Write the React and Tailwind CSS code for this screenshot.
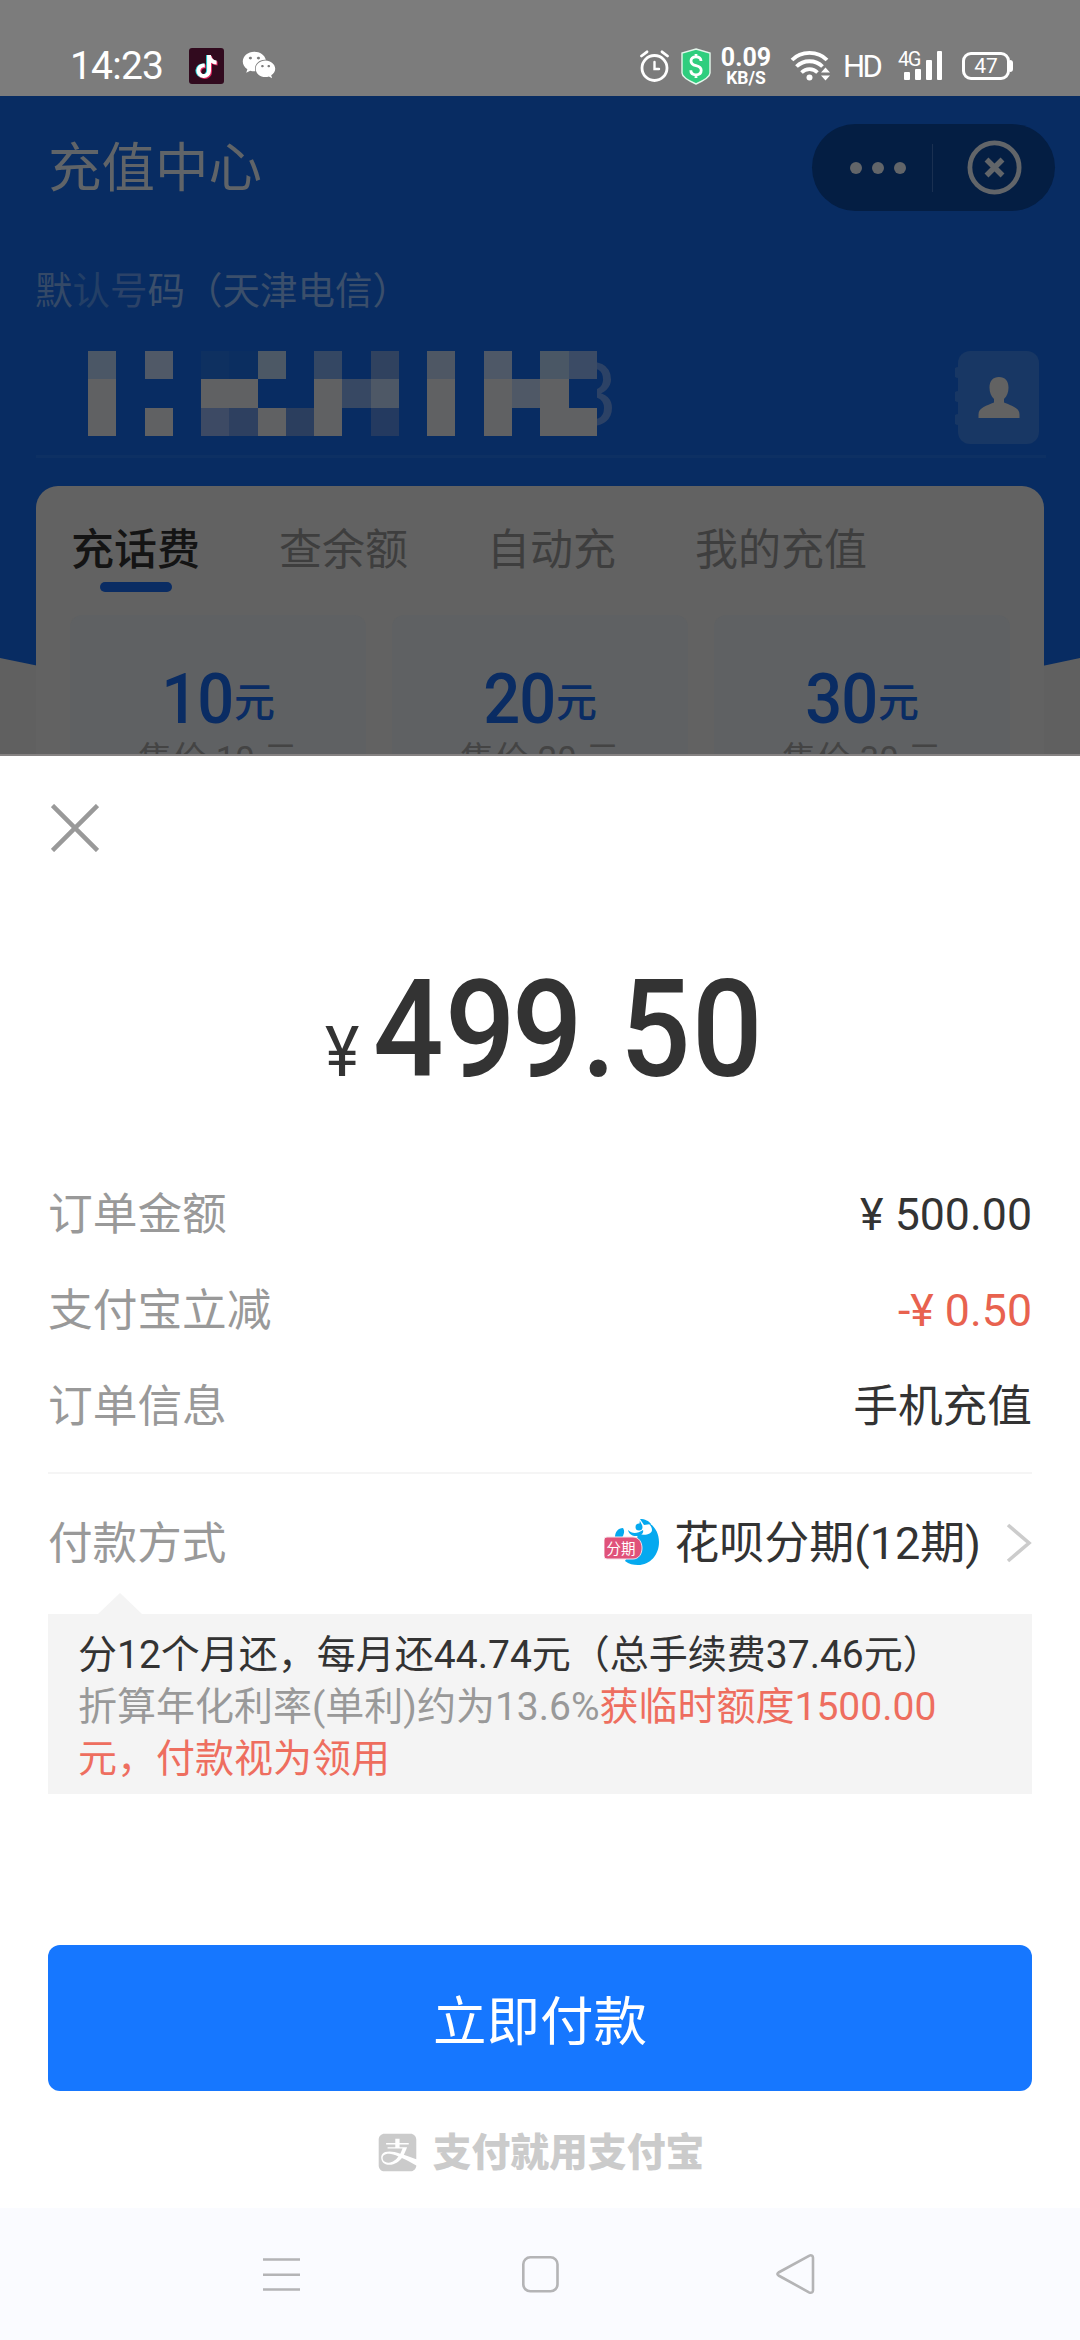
import React from "react";
import { FaAlipay, FaTiktok, FaWeixin } from "react-icons/fa";

const tabs = ["充话费", "查余额", "自动充", "我的充值"];

const amounts = [10, 20, 30];

const details = [
  { label: "订单金额", value: "¥ 500.00", color: "text-[#333333]" },
  { label: "支付宝立减", value: "-¥ 0.50", color: "text-[#e8624f]" },
  { label: "订单信息", value: "手机充值", color: "text-[#333333]" },
];

const price = [
  { char: "4", width: "w-[72px]" },
  { char: "9", width: "w-[72px]" },
  { char: "9", width: "w-[62px]" },
  { char: ".", width: "w-[42px]" },
  { char: "5", width: "w-[70px]" },
  { char: "0", width: "w-[74px]" },
];

// Censored phone number, null is a see-through cell
const F = "#606163";
const mosaic = [
  ["#4b5766", null, "#505967", null, "#0e3060", "#0b2e60", "#4c5865", null, "#344763", null, "#30425f", null, "#4e5764", null, "#4e5867", null, "#4a5765", "#3b4b65"],
  [F, null, null, null, F, F, null, null, F, "#374863", "#4e5866", null, F, null, F, "#4f5866", F, "#082c62"],
  [F, null, F, null, "#3d4a64", "#2e4060", F, "#2b3e5e", F, null, "#243a60", null, F, null, F, null, F, F],
];

const StatusBar = () => (
  <div className="flex h-[96px] items-start bg-[#7c7c7c] pl-[70px] pt-[48px] text-white">
    <span className="w-[119px] text-[39px] leading-[36px] tracking-[-0.8px]">14:23</span>
    <div className="relative h-[36px] w-[35px] rounded-[3px] bg-[#310a1e]">
      <FaTiktok className="absolute left-[5px] top-[7px] h-[23px] w-[23px] text-[#25d5dc]" />
      <FaTiktok className="absolute left-[7px] top-[8px] h-[23px] w-[23px] text-[#e0245e]" />
      <FaTiktok className="absolute left-[6px] top-[7px] h-[23px] w-[23px] text-white" />
    </div>
    <FaWeixin className="ml-[18px] h-[34px] w-[34px]" />

    <svg className="ml-[364px] mt-[2px] h-[32px] w-[29px]" viewBox="0 0 29 32" fill="none" stroke="#fff" strokeLinecap="round">
      <circle cx="14.5" cy="18" r="12.5" strokeWidth="2.8" />
      <path d="M1.5 6 7 1.8M27.5 6 22 1.8" strokeWidth="2.8" />
      <path d="M14.5 12v7h4.5" strokeWidth="2.4" />
    </svg>
    <svg className="ml-[12px] h-[37px] w-[30px]" viewBox="0 0 30 37">
      <path d="M15 1 29 5v20c0 3-5 7-14 11C6 32 1 28 1 25V5z" fill="#2fce7e" stroke="#e4f7ec" strokeWidth="1.4" />
      <path d="M20 13c0-3-2-4.200-5-4.200s-5 1.500-5 4.200 2 4 5 4.700 5.200 1.700 5.200 4.600-2.200 4.500-5.200 4.500-5.200-1.500-5.200-4.500M15 6v3M15 26.500V30" fill="none" stroke="#fff" strokeWidth="2.800" />
    </svg>
    <div className="ml-[10px] flex w-[50px] flex-col items-center font-bold">
      <span className="text-[25px] leading-[20px]">0.09</span>
      <span className="mt-[1px] text-[17.5px] leading-[19px]">KB/S</span>
    </div>
    <svg className="ml-[19px] mt-[2px] h-[32px] w-[42px]" viewBox="0 0 42 32" fill="none" stroke="#fff">
      <path d="M2 10c9-9.500 26-9.500 35 0" strokeWidth="3.800" />
      <path d="M6.500 16.500c7-7 19-7 26 0" strokeWidth="3.800" />
      <path d="M11.500 22.500c4.500-4.500 11.500-4.500 16 0" strokeWidth="3.600" />
      <circle cx="19.500" cy="27.500" r="3" fill="#fff" stroke="none" />
      <path d="m31 22.500 4.500-5 4.500 5zM31 25.500l4.500 5 4.500-5z" fill="#fff" stroke="none" />
    </svg>
    <span className="ml-[11px] mt-[1px] w-[42px] text-[31px] leading-[36px] tracking-[-2.5px]">HD</span>
    <div className="relative ml-[13px] mt-[3px] flex h-[29px] w-[46px] items-end gap-[5px] pl-[6px]">
      <span className="absolute left-0 top-[-1px] text-[20px] leading-[18px] tracking-[-1.5px]">4G</span>
      <span className="h-[8px] w-[6px] rounded-[1px] bg-white" />
      <span className="h-[11px] w-[6px] rounded-[1px] bg-white" />
      <span className="h-[20px] w-[6px] rounded-[1px] bg-white" />
      <span className="h-[29px] w-[5px] rounded-[1px] bg-white" />
    </div>
    <div className="ml-[18px] mt-[4px] flex items-center">
      <div className="flex h-[28px] w-[48px] items-center justify-center rounded-[9px] border-[3px] border-white text-[21px] leading-[22px]">
        47
      </div>
      <span className="h-[12px] w-[3px] rounded-r bg-white" />
    </div>
  </div>
);

const Header = () => (
  <div className="flex h-[144px] items-start justify-between pl-[48px] pr-[25px] pt-[28px]">
    <h1 className="text-[53.5px] leading-[90px] text-[#606468]">充值中心</h1>
    <div className="flex h-[87px] w-[243px] items-center rounded-full bg-[#041e43] pl-[38px]">
      <div className="flex gap-[10px]">
        <span className="h-[12px] w-[12px] rounded-full bg-[#626569]" />
        <span className="h-[12px] w-[12px] rounded-full bg-[#626569]" />
        <span className="h-[12px] w-[12px] rounded-full bg-[#626569]" />
      </div>
      <span className="ml-[26px] h-[48px] w-px bg-[#1a3051]" />
      <svg className="ml-[34px] h-[55px] w-[55px]" viewBox="0 0 55 55" fill="none" stroke="#626569">
        <circle cx="27.5" cy="27.5" r="24.600" strokeWidth="4.800" />
        <path d="m19.500 19.500 16 16m0-16-16 16" strokeWidth="5.500" />
      </svg>
    </div>
  </div>
);

const PhoneNumber = () => (
  <div className="ml-[36px] w-[1010px] border-b-[3px] border-[#0d3063]">
    <p className="-ml-px pt-[26px] text-[37.5px] leading-[50px] text-[#3b4f6b]">
      <span className="text-[#344967]">默</span>
      <span className="text-[#233f66]">认</span>
      <span className="text-[#2b4268]">号</span>
      码（天津电信）
    </p>
    <div className="flex h-[139px] items-start pl-[52px] pt-[35px]">
      <div className="relative">
        <span className="absolute right-[-21px] top-[-1px] text-[88px] leading-[90px] text-[#2c4266]">3</span>
        <div className="relative flex flex-col">
          {mosaic.map((row, i) => (
            <div key={i} className="flex">
              {row.map((color, j) => (
                <span
                  key={j}
                  className="h-[28.33px] w-[28.28px]"
                  style={{ backgroundColor: color || "transparent" }}
                />
              ))}
            </div>
          ))}
        </div>
      </div>
      <svg className="ml-[358px] h-[93px] w-[84px]" viewBox="0 0 84 93">
        <rect x="3" width="81" height="93" rx="12" fill="#183764" />
        <path d="M3 16a5.500 5.500 0 0 0 0 11zM3 40a5.500 5.500 0 0 0 0 11zM3 63a5.500 5.500 0 0 0 0 11z" fill="#183764" />
        <path
          d="M44 26c6 0 9.500 4 9.500 10.500 0 5-1.500 8.500-4.500 11.500v3.500c7 3 15.500 5 15.500 12V67h-41v-3.500c0-7 8.500-9 15.500-12V48c-3-3-4.500-6.500-4.500-11.500C34.500 30 38 26 44 26z"
          fill="#626262"
        />
      </svg>
    </div>
  </div>
);

const RechargeCard = () => (
  <div className="mx-[36px] mt-[28px] h-[270px] rounded-t-[22px] bg-[#626262] px-[34px]">
    <div className="flex h-[129px] gap-[79px] pl-px pt-[37px]">
      {tabs.map((tab, i) => (
        <div key={tab} className="flex flex-col items-center">
          <span
            className={
              i === 0
                ? "text-[43px] font-medium leading-[54px] text-[#141414]"
                : "text-[43px] leading-[54px] text-[#3e3e3e]"
            }
          >
            {tab}
          </span>
          {i === 0 && <span className="mt-[5px] h-[10px] w-[72px] rounded-full bg-[#0a2c63]" />}
        </div>
      ))}
    </div>
    <div className="grid grid-cols-3 gap-[26px]">
      {amounts.map((n) => (
        <div key={n} className="flex h-[200px] flex-col items-center rounded-[12px] bg-[#5f6163] pt-[47px] text-[#0a2c63]">
          <div className="flex items-start pr-[5px] leading-[74px]">
            <span className="w-[74px] origin-right scale-x-[.93] text-right text-[70px] font-medium tracking-[-1px]">{n}</span>
            <span className="ml-[4px] text-[41px] font-medium leading-[82px]">元</span>
          </div>
          <span className="-mt-[8px] text-[34.5px] leading-[46px] text-[#444444]">售价 {n} 元</span>
        </div>
      ))}
    </div>
  </div>
);

const HuabeiIcon = () => (
  <svg className="-mt-[4px] h-[48px] w-[56px]" viewBox="0 0 56 48">
    <path d="M36 2c11 1 19 10 19 22 0 13-9 23-21 23-5 0-9-1-13-4l12-22z" fill="#05a9ef" />
    <path d="M35 1c7 1 13 6 13 11 0 4-7 6-13 4-4 2-8 2-12-1l1-4c3 2 5 2 7 0 0-4 4-6 7-4z" fill="#fff" />
    <path d="M24 12c4 4 9 4 15 0 1 3-2 6-7 6-4 0-7-2-8-6zM36 1c5 0 9 2 11 5l-7 1z" fill="#05a9ef" />
    <circle cx="35" cy="9" r="3.500" fill="#05a9ef" />
    <path d="M11 19c0-5 3-9 8-9 2 3 1 6-1 10z" fill="#05a9ef" />
    <path d="M0 22q0-3 3-3h26c12 0 12 22 0 22H3q-3 0-3-3z" fill="#e0527a" stroke="#f5e0e8" strokeWidth="1" />
    <text x="2.500" y="35.500" fontSize="14.500" fill="#fff" fontFamily="Noto Sans CJK SC, sans-serif">
      分期
    </text>
  </svg>
);

const PaymentMethod = () => (
  <>
    <div className="flex h-[119px] items-center pt-[21px] text-[44.6px] leading-[96px] text-[#333333]">
      <span className="flex-1 text-[#999999]">付款方式</span>
      <HuabeiIcon />
      <span className="ml-[14px] text-[45px]">花呗分期(12期)</span>
      <svg className="-mt-[3px] ml-[25px] h-[40px] w-[26px]" viewBox="0 0 26 40" fill="none" stroke="#cccccc" strokeWidth="3.600">
        <path d="m2 2 21 18L2 38" />
      </svg>
    </div>
    <svg className="ml-[49px] h-[22px] w-[46px]" viewBox="0 0 46 22">
      <path d="M0 22 23 0l23 22z" fill="#f4f4f4" />
    </svg>
    <div className="-mt-px h-[180px] bg-[#f4f4f4] px-[30px] pt-[15px] text-[39px] leading-[52px] text-[#999999]">
      <p className="text-[#333333]">分12个月还，每月还44.74元（总手续费37.46元）</p>
      <p>
        折算年化利率(单利)约为13.6%
        <span className="text-[#ee6e5f]">获临时额度1500.00</span>
      </p>
      <p className="text-[#ee6e5f]">元，付款视为领用</p>
    </div>
  </>
);

const PaySheet = () => (
  <div className="flex h-[1452px] flex-col bg-white px-[48px]">
    <svg className="ml-[3px] mt-[48px] h-[48px] w-[48px]" viewBox="0 0 48 48" stroke="#999999" strokeWidth="4.500">
      <path d="m1.500 1.500 45 45m0-45-45 45" />
    </svg>

    <div className="mt-[98px] flex h-[160px] items-baseline pl-[277px] font-medium leading-[160px] text-[#333333]">
      <span className="w-[47px] text-[71px] font-normal">
        <span className="inline-block origin-left scale-x-[.92]">¥</span>
      </span>
      {price.map((p, i) => (
        <span key={i} className={`${p.width} flex justify-center text-[135px]`}>
          <span className="scale-x-[.92]">{p.char}</span>
        </span>
      ))}
    </div>

    <div className="mt-[56px] h-[308px] border-b-2 border-[#f5f5f5] pt-[1px] text-[44.7px] leading-[96px]">
      {details.map((d) => (
        <div key={d.label} className="flex justify-between">
          <span className="text-[#999999]">{d.label}</span>
          <span className={d.color}>{d.value}</span>
        </div>
      ))}
    </div>

    <PaymentMethod />

    <button className="mt-[151px] h-[146px] rounded-[12px] bg-[#1677ff] pt-[10px] text-[53.5px] leading-[136px] text-white">
      立即付款
    </button>
    <div className="mt-[40px] flex items-center justify-center gap-[14px] text-[#cbcbcb]">
      <FaAlipay className="h-[43px] w-[43px]" />
      <span className="text-[38.8px] font-black leading-[43px]">支付就用支付宝</span>
    </div>
  </div>
);

const NavBar = () => (
  <div className="flex h-[132px] items-start bg-[#fafbff] pl-[263px] pt-[45px]">
    <svg className="h-[42px] w-[37px]" viewBox="0 0 37 42" stroke="#b4b4b6" strokeWidth="2.600">
      <path d="M0 6.500h37M0 21.700h37M0 36.500h37" />
    </svg>
    <svg className="ml-[222px] h-[42px] w-[37px]" viewBox="0 0 37 42" fill="none" stroke="#b4b4b6" strokeWidth="2.600">
      <rect x="1.300" y="4.300" width="34.200" height="34" rx="7" />
    </svg>
    <svg className="ml-[217px] h-[42px] w-[40px]" viewBox="0 0 40 42" fill="none" stroke="#b4b4b6" strokeWidth="2.600">
      <path d="M2.500 19.500 33 2.800c2.500-1.200 4 0 4 2v32.500c0 2-1.500 3.200-4 2L2.500 22.500c-1.500-1-1.500-2 0-3z" strokeLinejoin="round" />
    </svg>
  </div>
);

export default function App() {
  return (
    <div className="flex h-[2340px] w-[1080px] flex-col overflow-hidden bg-white font-[Roboto,'Noto_Sans_CJK_SC',sans-serif]">
      <StatusBar />
      <div className="relative h-[660px] overflow-hidden bg-[#606060]">
        {/* Blue backdrop with curved bottom edge */}
        <svg className="absolute left-0 top-0 h-[660px] w-[1080px]" viewBox="0 0 1080 660">
          <path d="M0 0h1080v562Q540 680 0 562z" fill="#082c62" />
        </svg>
        <div className="relative">
          <Header />
          <PhoneNumber />
          <RechargeCard />
        </div>
        <div className="absolute bottom-0 left-0 h-[2px] w-full bg-[#858282]" />
      </div>
      <PaySheet />
      <NavBar />
    </div>
  );
}
